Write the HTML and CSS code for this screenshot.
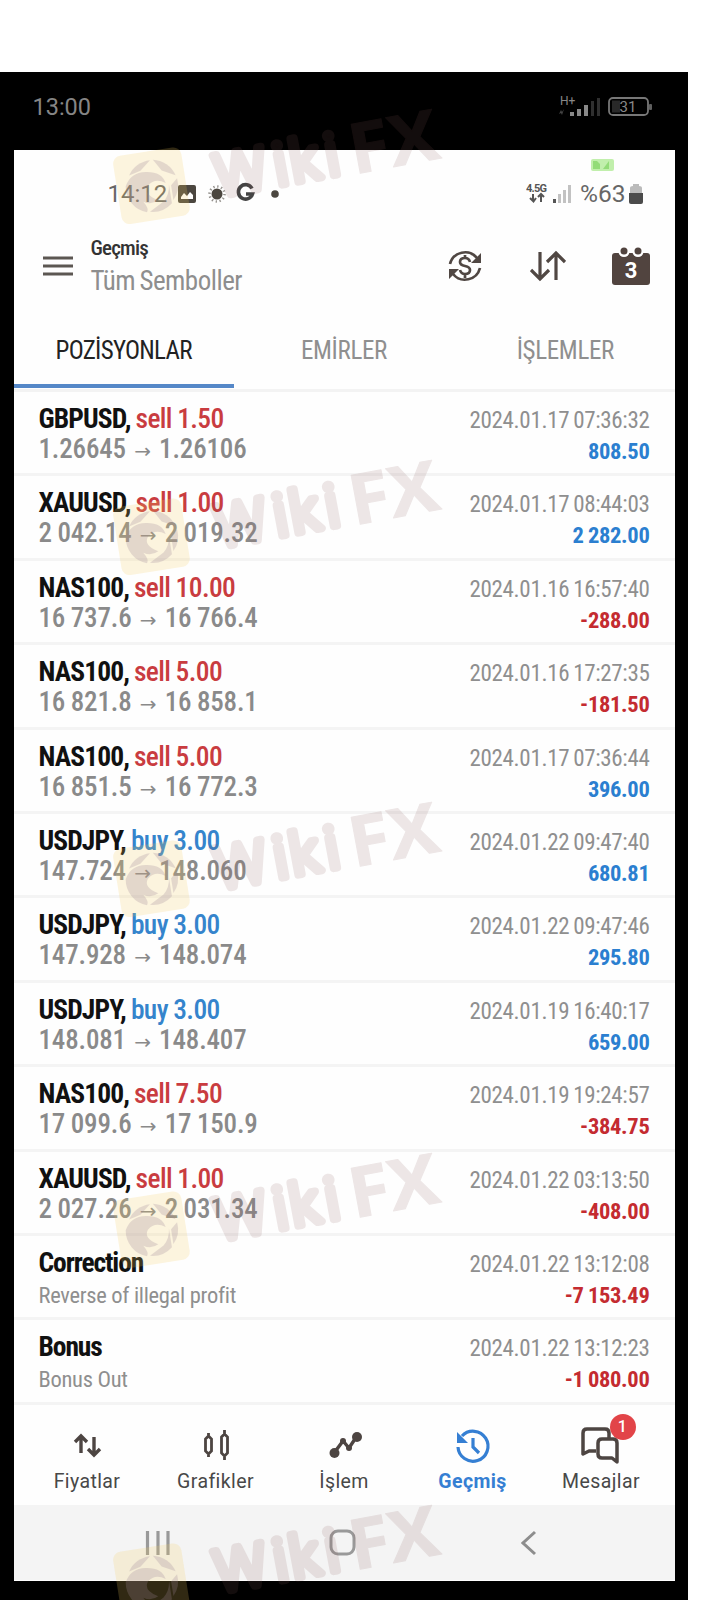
FILE: index.html
```
<!DOCTYPE html>
<html lang="tr">
<head>
<meta charset="utf-8">
<title>Geçmiş</title>
<link rel="stylesheet" href="styles.css">
</head>
<body>
<svg class="defs" width="0" height="0">
  <symbol id="mark" viewBox="0 -20 340 150" overflow="visible">
    <g transform="rotate(-9 40 78)">
      <rect x="4" y="43" width="69" height="69" rx="8" fill="#f7cf5e" opacity=".2"/>
      <g transform="translate(39 78)" fill="#9c8597" opacity=".25">
        <path d="M-21-14A26 26 0 0 1 2-26L-9-17Z"/>
        <path d="M5-26A26 26 0 0 1 25-7L12-14Z"/>
        <path d="M26-4A26 26 0 0 1 19 17L19 2Z"/>
        <path d="M17 20A26 26 0 0 1-6 25L9 17Q16 11 17 1Z"/>
        <path d="M-26-4Q-19-17-4-15Q12-13 14-1Q4-8-4-1Q-10 7 4 15Q-4 19-11 14Q-6 22-9 25A26 26 0 0 1-26-4Z"/>
      </g>
    </g>
    <g transform="translate(103 92) rotate(-10.5)" opacity=".14" fill="#8a5a5a" stroke="#8a5a5a" stroke-linejoin="round">
      <text class="mark-text soft" x="3 63 80 115.500" y="-3" stroke-width="8">Wiki</text>
      <text class="mark-text" x="140" textLength="90" lengthAdjust="spacingAndGlyphs" stroke-width="1">FX</text>
    </g>
  </symbol>
</svg>
<div class="phone">
  <div class="outer-bar">
    <span>13:00</span>
    <svg width="98" height="30" viewBox="0 0 98 30" fill="#888">
      <text x="4" y="12" class="tiny">H+</text>
      <path d="M3 21l2-4 1 2 2-3-2 6-1-2z" opacity=".5"/>
      <rect x="14" y="19" width="4" height="4"/><rect x="21" y="16" width="4" height="7"/><rect x="28" y="12" width="4" height="11"/>
      <rect x="35" y="8" width="3" height="15" opacity=".35"/><rect x="41" y="5" width="3" height="18" opacity=".35"/>
      <rect x="53" y="5" width="39" height="17" rx="4" fill="none" stroke="#777" stroke-width="1.8"/>
      <rect x="56" y="7.500" width="8" height="12" opacity=".3"/><rect x="93" y="11" width="3" height="6" rx="1" opacity=".7"/>
      <text x="72" y="19" text-anchor="middle" class="pct">31</text>
    </svg>
  </div>
  <div class="screen">
    <div class="status">
      <span>14:12</span>
      <svg width="104" height="24" viewBox="0 0 104 24" fill="#4b463f">
        <path fill-rule="evenodd" d="M3 3h14q2 0 2 2v14q0 2-2 2H3q-2 0-2-2V5q0-2 2-2zm1 14h12v-4l-3-3-3 4-3-3-3 4z"/>
        <circle cx="40" cy="12" r="5.500"/><circle cx="40" cy="12" r="7.500" fill="none" stroke="#4b463f" stroke-width="2.500" stroke-dasharray="1.300 2.627" opacity=".6"/>
        <path d="M75 6.500A7.200 7.200 0 1 0 75.500 12H69" fill="none" stroke="#444" stroke-width="3.600"/>
        <circle cx="98" cy="12" r="3.800"/>
      </svg>
      <i class="grow"></i>
      <svg class="net" width="48" height="26" viewBox="0 0 48 26" fill="#555">
        <text x="0" y="11" class="lte" textLength="21">4.5G</text>
        <path d="M7 13v7M4 17l3.500 3.500L10 17M15 21v-8M12 16l3-3 3 3" fill="none" stroke="#555" stroke-width="2"/>
        <rect x="27" y="18" width="3" height="4"/><g opacity=".35"><rect x="32" y="13" width="3" height="9"/><rect x="37" y="9" width="3" height="13"/><rect x="42" y="4" width="3" height="18"/></g>
      </svg>
      <span class="battery-label">%63</span>
      <svg width="14" height="22" viewBox="0 0 14 22"><path d="M1 10V5q0-2 3-2V1h6v2q3 0 3 2v5z" fill="#bbb"/><path d="M0 10h14v9q0 2-2 2H2q-2 0-2-2z" fill="#4b4b4b"/></svg>
      <svg class="cast" width="23" height="12" viewBox="0 0 23 12"><rect width="23" height="12" rx="2" fill="#c1efac"/><path d="M2 2h4l3 3v5H2zM12 10l6-8v8z" fill="#93dc78"/></svg>
    </div>
    <header class="header">
      <svg class="menu" width="30" height="22" viewBox="0 0 30 22" stroke="#5c5752" stroke-width="3"><path d="M0 3h30M0 11h30M0 19h30"/></svg>
      <div class="titles"><b class="t1">Geçmiş</b><span class="t2">Tüm Semboller</span></div>
      <svg class="money" width="34" height="34" viewBox="0 0 34 34" fill="none" stroke="#504743" stroke-width="2.700">
        <path d="M2 15A15.500 15.500 0 0 1 29 9M32 19A15.500 15.500 0 0 1 5 25"/>
        <path d="M33 4v10H23zM1 30V20h10z" fill="#504743" stroke="none"/>
        <path d="M22 13q-1-4-5-4-5 0-5 4 0 3 5 4t5 4q0 4-5 4-4 0-5-4M17 6v4M17 25v4"/>
      </svg>
      <svg class="sort" width="36" height="32" viewBox="0 0 36 32" fill="none" stroke="#504743" stroke-width="3.200"><path d="M10 2v27M1 20l9 9 9-9M26 30V3M17 12l9-9 9 9"/></svg>
      <svg width="38" height="38" viewBox="0 0 38 38" fill="#51443f">
        <rect y="6" width="38" height="32" rx="3"/><circle cx="12" cy="4.500" r="5.500" fill="#fff"/><circle cx="26" cy="4.500" r="5.500" fill="#fff"/><circle cx="12" cy="4" r="3.500"/><circle cx="26" cy="4" r="3.500"/>
        <text x="19" y="31" text-anchor="middle" class="cal">3</text>
      </svg>
    </header>
    <nav class="tabs"><span class="on">POZİSYONLAR</span><span>EMİRLER</span><span class="deals">İŞLEMLER</span></nav>
    <main class="list">
      <div class="row"><div><p class="sym">GBPUSD, <em class="sell">sell 1.50</em></p><p class="price">1.26645 <i>→</i> 1.26106</p></div><div class="r"><p class="date">2024.01.17 07:36:32</p><p class="sum">808.50</p></div></div>
      <div class="row"><div><p class="sym">XAUUSD, <em class="sell">sell 1.00</em></p><p class="price">2 042.14 <i>→</i> 2 019.32</p></div><div class="r"><p class="date">2024.01.17 08:44:03</p><p class="sum">2 282.00</p></div></div>
      <div class="row"><div><p class="sym">NAS100, <em class="sell">sell 10.00</em></p><p class="price">16 737.6 <i>→</i> 16 766.4</p></div><div class="r"><p class="date">2024.01.16 16:57:40</p><p class="sum loss">-288.00</p></div></div>
      <div class="row"><div><p class="sym">NAS100, <em class="sell">sell 5.00</em></p><p class="price">16 821.8 <i>→</i> 16 858.1</p></div><div class="r"><p class="date">2024.01.16 17:27:35</p><p class="sum loss">-181.50</p></div></div>
      <div class="row"><div><p class="sym">NAS100, <em class="sell">sell 5.00</em></p><p class="price">16 851.5 <i>→</i> 16 772.3</p></div><div class="r"><p class="date">2024.01.17 07:36:44</p><p class="sum">396.00</p></div></div>
      <div class="row"><div><p class="sym">USDJPY, <em class="buy">buy 3.00</em></p><p class="price">147.724 <i>→</i> 148.060</p></div><div class="r"><p class="date">2024.01.22 09:47:40</p><p class="sum">680.81</p></div></div>
      <div class="row"><div><p class="sym">USDJPY, <em class="buy">buy 3.00</em></p><p class="price">147.928 <i>→</i> 148.074</p></div><div class="r"><p class="date">2024.01.22 09:47:46</p><p class="sum">295.80</p></div></div>
      <div class="row"><div><p class="sym">USDJPY, <em class="buy">buy 3.00</em></p><p class="price">148.081 <i>→</i> 148.407</p></div><div class="r"><p class="date">2024.01.19 16:40:17</p><p class="sum">659.00</p></div></div>
      <div class="row"><div><p class="sym">NAS100, <em class="sell">sell 7.50</em></p><p class="price">17 099.6 <i>→</i> 17 150.9</p></div><div class="r"><p class="date">2024.01.19 19:24:57</p><p class="sum loss">-384.75</p></div></div>
      <div class="row"><div><p class="sym">XAUUSD, <em class="sell">sell 1.00</em></p><p class="price">2 027.26 <i>→</i> 2 031.34</p></div><div class="r"><p class="date">2024.01.22 03:13:50</p><p class="sum loss">-408.00</p></div></div>
      <div class="row"><div><p class="sym word">Correction</p><p class="note">Reverse of illegal profit</p></div><div class="r"><p class="date">2024.01.22 13:12:08</p><p class="sum loss">-7 153.49</p></div></div>
      <div class="row"><div><p class="sym word">Bonus</p><p class="note">Bonus Out</p></div><div class="r"><p class="date">2024.01.22 13:12:23</p><p class="sum loss">-1 080.00</p></div></div>
    </main>
    <nav class="bottom">
      <div class="item"><svg width="40" height="40" viewBox="0 0 40 40" fill="none" stroke="#4d4542" stroke-width="3.400"><path d="M14 28V11M8 17l6-6 6 6M27 12v17M21 24l6 6 6-6"/></svg><span>Fiyatlar</span></div>
      <div class="item"><svg width="40" height="40" viewBox="0 0 40 40" fill="none" stroke="#4d4542" stroke-width="2.800"><path d="M9.500 14l3-3 3 3v12l-3 3-3-3zM12.500 8v4M12.500 28v4M25.500 12l3-3 3 3v16l-3 3-3-3zM28.500 5v5M28.500 30v5"/></svg><span>Grafikler</span></div>
      <div class="item"><svg width="40" height="40" viewBox="0 0 40 40" fill="#4d4542"><path d="M10 28l9-12 6 7 8-12" fill="none" stroke="#4d4542" stroke-width="3.400"/><circle cx="10.500" cy="28" r="5"/><circle cx="19" cy="16" r="3"/><circle cx="25" cy="23" r="3"/><circle cx="33" cy="12" r="5"/></svg><span>İşlem</span></div>
      <div class="item active"><svg width="40" height="40" viewBox="0 0 40 40" fill="none" stroke="#357fd3" stroke-width="3.200"><path d="M5 22A15 15 0 1 0 9 11M20 13v9l6 6"/><path d="M4 7v11h11z" fill="#357fd3" stroke="none"/></svg><span>Geçmiş</span></div>
      <div class="item"><svg width="40" height="40" viewBox="0 0 40 40" fill="none" stroke="#4d4542" stroke-width="3.500" stroke-linejoin="round"><path d="M15 26H8l-6 3V8q0-4 4-4h18q4 0 4 4v5"/><path d="M21 14h11q4 0 4 4v19l-5-4h-10q-4 0-4-4V18q0-4 4-4z"/></svg><b class="badge">1</b><span>Mesajlar</span></div>
    </nav>
    <div class="system">
      <svg width="26" height="26" viewBox="0 0 26 26" stroke="#999" stroke-width="3.200"><path d="M2.500 1v24M13 1v24M23 1v24"/></svg>
      <svg class="home" width="28" height="28" viewBox="0 0 28 28" fill="none" stroke="#999" stroke-width="3"><rect x="2" y="2" width="23" height="23" rx="7"/></svg>
      <svg width="16" height="26" viewBox="0 0 16 26" fill="none" stroke="#8d8d8d" stroke-width="3"><path d="M14 2L2 13l12 11"/></svg>
    </div>
  </div>
</div>
<svg class="mark m1"><use href="#mark"/></svg>
<svg class="mark m2"><use href="#mark"/></svg>
<svg class="mark m3"><use href="#mark"/></svg>
<svg class="mark m4"><use href="#mark"/></svg>
<svg class="mark m5"><use href="#mark"/></svg>
</body>
</html>
```
FILE: styles.css
```
* { box-sizing: border-box; }
body { margin: 0; width: 720px; height: 1600px; overflow: hidden; padding-top: 72px; background: #fff; position: relative; font-family: Roboto, sans-serif; }
p { margin: 0; }
i, em { font-style: normal; }
.defs { position: absolute; }
.phone { width: 688px; height: 1528px; background: #000; padding: 0 13.5px; }
.outer-bar { height: 78px; padding: 21px 21px 0 19px; display: flex; justify-content: space-between; align-items: flex-start; color: #858585; font-size: 23.5px; line-height: 28px; }
.tiny { font: 12px Roboto, sans-serif; }
.pct { font: 15px Roboto, sans-serif; }
.screen { width: 661px; height: 1431px; background: #fefefe; display: flex; flex-direction: column; }
.status { height: 80px; padding: 7px 32px 0 94px; display: flex; align-items: center; color: #666; font-size: 24px; line-height: 28px; position: relative; }
.status span { margin-right: 10px; }
.status .battery-label { margin: 0 3px 0 6px; font-size: 24.5px; }
.grow { flex: 1; }
.lte { font: bold 11px Roboto, sans-serif; }
.cast { position: absolute; left: 577px; top: 9px; }
.header { height: 73px; padding: 0 25px 0 29px; display: flex; align-items: center; }
.header svg { margin-top: -2px; }
.titles { margin: 1px 0 0 18px; flex: 1; display: flex; flex-direction: column; font-family: "Roboto Condensed", Roboto, sans-serif; font-stretch: 75%; }
.t1 { font-size: 21px; line-height: 28px; font-weight: 500; color: #333; letter-spacing: -.8px; }
.t2 { font-size: 27px; line-height: 39px; color: #8e8e8e; letter-spacing: -.5px; word-spacing: -1.500px; }
.money { margin-right: 48px; }
.sort { margin-right: 46px; }
.cal { font: bold 22px Roboto, sans-serif; fill: #fff; }
.tabs { height: 89px; border-bottom: 3px solid #f3f3f3; display: grid; grid-template-columns: repeat(3, 1fr); text-align: center; font: 25px "Roboto Condensed", Roboto, sans-serif; font-stretch: 75%; color: #8f8f8f; letter-spacing: -.35px; }
.tabs span { height: 85px; line-height: 96px; }
.tabs .on { color: #222; border-bottom: 4px solid #5588c8; letter-spacing: -.7px; }
.tabs .deals { padding-left: 2px; }
.row { height: 84.4px; border-bottom: 3px solid #f4f4f4; padding: 12px 25px 0; display: flex; justify-content: space-between; font-family: "Roboto Condensed", Roboto, sans-serif; font-stretch: 75%; white-space: pre; }
.sym { font-size: 27.5px; line-height: 30px; font-weight: 700; color: #111; letter-spacing: -.9px; word-spacing: -.5px; }
.sym.word { letter-spacing: -1.1px; }
.sym em { font-weight: 500; letter-spacing: -.6px; }
.sell { color: #c93c40; }
.buy { color: #3584cc; }
.price { font-size: 27px; line-height: 31px; font-weight: 500; color: #8a8a8a; letter-spacing: -.15px; word-spacing: -.5px; }
.price i { display: inline-block; width: 22px; text-align: center; font: 20px/20px "DejaVu Sans", sans-serif; }
.note { font-size: 22.5px; line-height: 34px; color: #8f8f8f; letter-spacing: -.3px; }
.r { text-align: right; padding-top: 2px; }
.date { font-size: 23px; line-height: 30px; color: #8f8f8f; letter-spacing: -.32px; word-spacing: -1px; }
.sum { font-size: 22.5px; line-height: 30px; font-weight: 700; color: #2b7fd0; letter-spacing: -.3px; word-spacing: -.5px; }
.sum.loss { color: #c42b30; }
.bottom { flex: 1; display: grid; grid-template-columns: 147px 110px 147px 110px 147px; }
.item { display: flex; flex-direction: column; align-items: center; padding-top: 20px; position: relative; font-size: 19.5px; line-height: 34px; color: #484848; letter-spacing: .4px; }
.item.active { color: #357fd3; font-weight: 700; }
.badge { position: absolute; right: 39px; top: 9px; width: 26px; height: 26px; border-radius: 50%; background: #e24448; color: #fff; font-size: 16px; line-height: 26px; text-align: center; font-weight: 500; }
.system { height: 76px; background: #f4f4f4; display: flex; align-items: center; padding: 0 138px 0 131px; justify-content: space-between; border-bottom: 1px solid #fff; }
.home { margin-right: 5px; }
.mark { position: absolute; left: 113px; width: 340px; height: 150px; overflow: visible; pointer-events: none; }
.mark-text { font: bold 70px "Open Sans", sans-serif; }
.mark-text.soft { font: 300 58px Roboto, sans-serif; }
.m1 { top: 88px; }
.m2 { top: 439px; }
.m3 { top: 781px; }
.m4 { top: 1132px; }
.m5 { top: 1484px; }
```
